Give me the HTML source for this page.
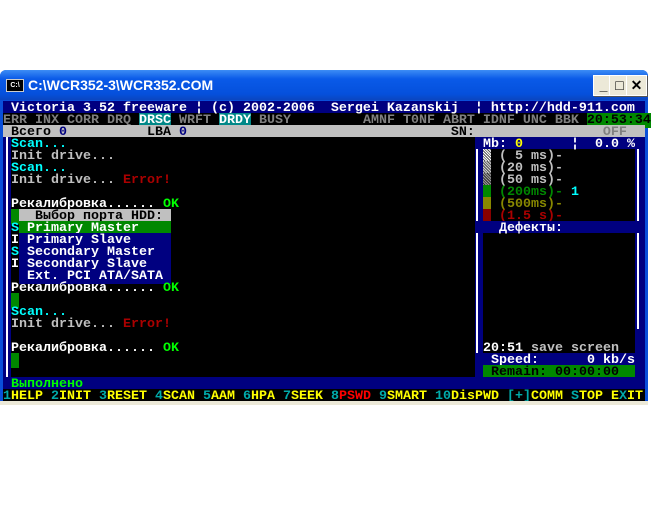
<!DOCTYPE html>
<html><head><meta charset="utf-8"><style>
body{margin:0;width:651px;height:512px;background:#fff;position:relative;overflow:hidden;font-family:"Liberation Mono",monospace}
.win{position:absolute;left:0;top:70px;width:648px;height:335px;background:#0a4fd9;border-radius:6px 6px 0 0}
.tb{position:absolute;left:0;top:0;width:648px;height:30px;border-radius:6px 6px 0 0;background:linear-gradient(#3d8df5,#0a5ae8 30%,#0550dc 80%,#0a46c0)}
.tt{position:absolute;left:28px;top:7px;color:#fff;font:bold 14px "Liberation Sans",sans-serif}
.ic{position:absolute;left:6px;top:9px;width:16px;height:11px;background:#000;border:1px solid #ccc;color:#fff;font:bold 7px "Liberation Sans";line-height:11px;text-align:center}
.bt{position:absolute;top:5px;width:19px;height:19px;background:#ece9d8;border:1px solid #fff;box-shadow:1px 1px 0 #555;font:bold 14px "Liberation Sans";text-align:center;line-height:19px;color:#000}
.con{position:absolute;left:3px;top:31px;width:642px;height:300px;background:#000}
.r{position:absolute;left:0;height:12px;line-height:15px;font-size:13.33px;font-weight:bold;white-space:pre;color:#c0c0c0}
.b{background:#000080}.g{background:#c0c0c0;color:#000}
.w{color:#fff}.c{color:#0ff}.gr{color:#0f0}.dr{color:#a00}.dg{color:#808080}.y{color:#ff0}.t{color:#0aa}.bl{color:#000080}
.bot{position:absolute;left:0;top:331px;width:648px;height:4px;background:#ece9d8}
</style></head><body>
<div class="win">
<div class="tb"><div class="ic">C:\</div><div class="tt">C:\WCR352-3\WCR352.COM</div>
<div class="bt" style="left:593px">_</div><div class="bt" style="left:609px">□</div><div class="bt" style="left:626px">✕</div></div>
<div class="con">
<div class="r b w" style="top:0;width:642px"> Victoria 3.52 freeware ¦ (c) 2002-2006  Sergei Kazanskij  ¦ http://hdd-911.com</div>
<div class="r dg" style="top:12px;width:642px">ERR INX CORR DRQ <span class="w" style="background:#088">DRSC</span> WRFT <span class="w" style="background:#088">DRDY</span> BUSY         AMNF T0NF ABRT IDNF UNC BBK <span style="background:#080;color:#000">20:53:34</span></div>
<div class="r g" style="top:24px;width:642px"> Всего <span class="bl">0</span>          LBA <span class="bl">0</span>                                 SN:                <span class="dg">OFF</span></div>
<div style="position:absolute;left:0;top:36px;width:8px;height:240px;background:#000080"></div>
<div style="position:absolute;left:3px;top:36px;width:2px;height:240px;background:#fff"></div>
<div style="position:absolute;left:472px;top:36px;width:8px;height:240px;background:#000080"></div>
<div style="position:absolute;left:473px;top:48px;width:2px;height:216px;background:#fff"></div>
<div style="position:absolute;left:632px;top:48px;width:10px;height:228px;background:#000080"></div>
<div style="position:absolute;left:634px;top:48px;width:2px;height:180px;background:#fff"></div>
<div class="r" style="top:36px"> <span class="c">Scan...</span></div>
<div class="r" style="top:48px"> Init drive...</div>
<div class="r" style="top:60px"> <span class="c">Scan...</span></div>
<div class="r" style="top:72px"> Init drive... <span class="dr">Error!</span></div>
<div class="r w" style="top:96px"> Рекалибровка...... <span class="gr">OK</span></div>
<div class="r" style="top:108px"> <span style="background:#080"> </span><span class="g">  Выбор порта HDD: </span></div>
<div class="r w" style="top:120px"> <span class="c">S</span><span style="background:#080"> Primary Master    </span></div>
<div class="r w" style="top:132px"> I<span class="b"> Primary Slave     </span></div>
<div class="r w" style="top:144px"> <span class="c">S</span><span class="b"> Secondary Master  </span></div>
<div class="r w" style="top:156px"> I<span class="b"> Secondary Slave   </span></div>
<div class="r w" style="top:168px">  <span class="b"> Ext. PCI ATA/SATA </span></div>
<div class="r w" style="top:180px"> Рекалибровка...... <span class="gr">OK</span></div>
<div class="r" style="top:192px"> <span style="background:#080"> </span></div>
<div class="r" style="top:204px"> <span class="c">Scan...</span></div>
<div class="r" style="top:216px"> Init drive... <span class="dr">Error!</span></div>
<div class="r w" style="top:240px"> Рекалибровка...... <span class="gr">OK</span></div>
<div class="r" style="top:252px"> <span style="background:#080"> </span></div>
<div class="r b w" style="top:36px;left:472px;width:170px"> Mb: <span class="y">0</span>      ¦  0.0 %</div>
<div class="r" style="top:48px;left:480px"><span style="background:repeating-linear-gradient(45deg,#fff 0 1px,#555 1px 2px)"> </span> ( 5 ms)-</div>
<div class="r" style="top:60px;left:480px"><span style="background:repeating-linear-gradient(45deg,#ccc 0 1px,#555 1px 2px)"> </span> (20 ms)-</div>
<div class="r" style="top:72px;left:480px"><span style="background:repeating-linear-gradient(45deg,#999 0 1px,#333 1px 2px)"> </span> (50 ms)-</div>
<div class="r" style="top:84px;left:480px;color:#080"><span style="background:#080"> </span> (200ms)- <span class="c">1</span></div>
<div class="r" style="top:96px;left:480px;color:#880"><span style="background:#880"> </span> (500ms)-</div>
<div class="r" style="top:108px;left:480px;color:#a00"><span style="background:#800"> </span> (1.5 s)-</div>
<div class="r b w" style="top:120px;left:472px;width:170px">   Дефекты:</div>
<div class="r" style="top:240px;left:480px"><span class="w">20:51</span> save screen</div>
<div class="r b w" style="top:252px;left:472px;width:160px">  Speed:      0 kb/s</div>
<div class="r" style="top:264px;left:480px;width:152px;background:#080;color:#000"> Remain: 00:00:00</div>
<div class="r b gr" style="top:276px;width:642px"> Выполнено</div>
<div class="r y" style="top:288px;width:642px"><span class="t">1</span>HELP <span class="t">2</span>INIT <span class="t">3</span>RESET <span class="t">4</span>SCAN <span class="t">5</span>AAM <span class="t">6</span>HPA <span class="t">7</span>SEEK <span class="t">8</span><span style="color:#f00">PSWD</span> <span class="t">9</span>SMART <span class="t">10</span>DisPWD <span class="t">[+]</span>COMM <span class="t">S</span>TOP E<span class="t">X</span>IT</div>
</div>
<div class="bot"></div>
</div>
</body></html>
